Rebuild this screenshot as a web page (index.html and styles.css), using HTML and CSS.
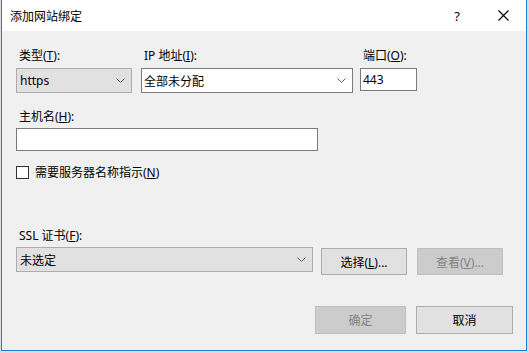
FILE: index.html
```html
<!DOCTYPE html>
<html>
<head>
<meta charset="utf-8">
<title>添加网站绑定</title>
<link rel="stylesheet" href="styles.css">
</head>
<body>
<div class="window">
 <div class="titlebar">
  <span class="title">添加网站绑定</span>
  <span class="help">?</span>
  <span class="close"><svg width="11" height="11" viewBox="0 0 11 11"><path d="M0.5 0.5 L10.5 10.5 M10.5 0.5 L0.5 10.5" stroke="#000" stroke-width="1.1" fill="none"/></svg></span>
 </div>
 <div class="content">
  <div class="row-top">
   <div class="field f-type">
    <label>类型(<u>T</u>):</label>
    <div class="combo gray"><span>https</span><svg class="chev" width="9" height="5" viewBox="0 0 9 5"><path d="M0.5 0.5 L4.5 4.5 L8.5 0.5" stroke="#606060" fill="none"/></svg></div>
   </div>
   <div class="field f-ip">
    <label>IP 地址(<u>I</u>):</label>
    <div class="combo white"><span>全部未分配</span><svg class="chev" width="9" height="5" viewBox="0 0 9 5"><path d="M0.5 0.5 L4.5 4.5 L8.5 0.5" stroke="#606060" fill="none"/></svg></div>
   </div>
   <div class="field f-port">
    <label>端口(<u>O</u>):</label>
    <div class="textbox port">443</div>
   </div>
  </div>
  <div class="field host">
   <label>主机名(<u>H</u>):</label>
   <div class="textbox hostname"></div>
  </div>
  <div class="check">
   <span class="box"></span>
   <span>需要服务器名称指示(<u>N</u>)</span>
  </div>
  <div class="field ssl">
   <label>SSL 证书(<u>F</u>):</label>
   <div class="ssl-row">
    <div class="combo gray cert"><span>未选定</span><svg class="chev" width="9" height="5" viewBox="0 0 9 5"><path d="M0.5 0.5 L4.5 4.5 L8.5 0.5" stroke="#606060" fill="none"/></svg></div>
    <button class="btn pick">选择(<u>L</u>)...</button>
    <button class="btn view" disabled>查看(<u>V</u>)...</button>
   </div>
  </div>
  <div class="actions">
   <button class="btn ok" disabled>确定</button>
   <button class="btn cancel">取消</button>
  </div>
 </div>
</div>
</body>
</html>
```

FILE: styles.css
```css
html, body {
 margin: 0;
 padding: 0;
}
body {
 background: #dcdcdc;
 font-family: "Noto Sans", "Noto Sans CJK SC", sans-serif;
 font-size: 12px;
 color: #000;
 width: 529px;
 height: 353px;
 overflow: hidden;
}
.window {
 margin-left: 1px;
 width: 524px;
 height: 350px;
 border: 1px solid #1f7bd3;
 border-top: none;
 background: #f0f0f0;
 display: flex;
 flex-direction: column;
}
.titlebar {
 height: 31px;
 background: #fff;
 display: flex;
 align-items: center;
 flex-shrink: 0;
}
.title {
 padding-left: 8px;
 flex: 1;
}
.help {
 width: 46px;
 text-align: center;
 font-size: 13px;
}
.close {
 width: 46px;
 display: flex;
 justify-content: center;
}
.content {
 padding: 17px 13px 0 14px;
 display: flex;
 flex-direction: column;
}
.field {
 display: flex;
 flex-direction: column;
}
.field label {
 height: 16px;
 line-height: 16px;
 padding-left: 3px;
}
.row-top {
 display: flex;
}
.f-type {
 width: 116px;
 margin-right: 9px;
}
.f-ip {
 width: 212px;
 margin-right: 7px;
}
.f-port {
 width: 57px;
}
.row-top .field label {
 margin-bottom: 4px;
}
.combo {
 box-sizing: border-box;
 height: 25px;
 display: flex;
 align-items: center;
 justify-content: space-between;
 padding: 0 6px 0 3px;
}
.combo.gray {
 background: #e1e1e1;
 border: 1px solid #adadad;
}
.combo.white {
 background: #fff;
 border: 1px solid #7a7a7a;
 padding-left: 2px;
}
.textbox {
 box-sizing: border-box;
 background: #fff;
 border: 1px solid #7a7a7a;
 height: 23px;
 line-height: 21px;
 padding-left: 2px;
}
.host {
 margin-top: 16px;
}
.host label {
 margin-bottom: 3px;
}
.hostname {
 width: 302px;
}
.check {
 margin-top: 13px;
 height: 16px;
 display: flex;
 align-items: center;
 gap: 6px;
}
.check .box {
 box-sizing: border-box;
 width: 13px;
 height: 13px;
 border: 1px solid #333;
 background: #fff;
}
.ssl {
 margin-top: 48px;
}
.ssl label {
 margin-bottom: 3px;
}
.ssl-row {
 display: flex;
 align-items: flex-start;
}
.cert {
 width: 297px;
}
.btn {
 box-sizing: border-box;
 font: inherit;
 color: #000;
 background: #e1e1e1;
 border: 1px solid #adadad;
 padding: 0;
 height: 27px;
}
.btn:disabled {
 background: #cccccc;
 border-color: #bfbfbf;
 color: #838383;
}
.pick {
 margin: 1px 0 0 8px;
 width: 86px;
}
.view {
 margin: 1px 0 0 10px;
 width: 86px;
}
.actions {
 margin-top: 31px;
 display: flex;
 justify-content: flex-end;
 gap: 10px;
}
.actions .btn {
 height: 28px;
}
.ok {
 width: 91px;
}
.cancel {
 width: 97px;
}
```
